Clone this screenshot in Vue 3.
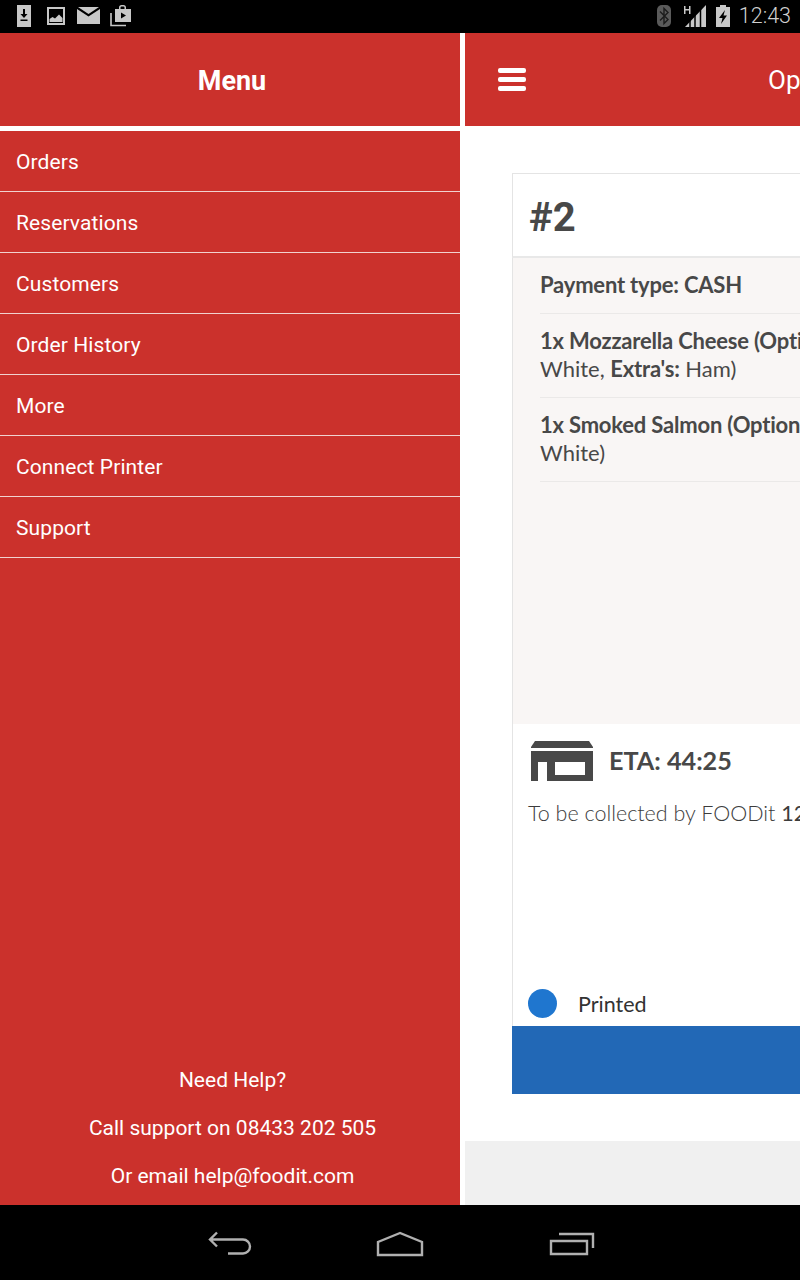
<script setup>
const menu = ['Orders', 'Reservations', 'Customers', 'Order History', 'More', 'Connect Printer', 'Support']
</script>

<template>
  <div class="screen">
    <div class="status">
      <div class="status-left">
        <svg width="16" height="22" viewBox="0 0 16 22"><path fill="#c8c8c8" fill-rule="evenodd" d="M1 0h14v22H1zM7 4v5H4.500L8 13l3.500-4H9V4zM4.500 14.500v1.500h7v-1.500z"/></svg>
        <svg width="18" height="18" viewBox="0 0 18 18"><path fill="#c8c8c8" fill-rule="evenodd" d="M0 0h18v18H0zM2 2v14h14V2z"/><path fill="#c8c8c8" d="M2.500 15v-3l3-2 2.500 1.500 4-4 3.500 3.500v4z"/></svg>
        <svg width="23" height="17" viewBox="0 0 23 17"><path fill="#c8c8c8" d="M1 0h21l-10.500 7zM0 2l11.500 7.500L23 2v15H0z"/></svg>
        <svg width="22" height="22" viewBox="0 0 22 22"><path fill="#c8c8c8" fill-rule="evenodd" d="M5 4h4V2.500C9 1 10 0 11.500 0h2C15 0 16 1 16 2.500V4h5v13H5zM10.500 4h4V2.500q0-1-1-1h-2q-1 0-1 1zM11 7.500v6l5-3z"/><path fill="none" stroke="#c8c8c8" stroke-width="1.600" d="M1 8v12.500h15"/></svg>
      </div>
      <div class="status-right">
        <svg width="14" height="22" viewBox="0 0 14 22"><rect width="14" height="22" rx="5" fill="#5a5a5a"/><path fill="none" stroke="#1c1c1c" stroke-width="1.400" d="M3 6.500l8 8L7 18.500V3.500l4 4-8 8"/></svg>
        <svg class="signal" width="24" height="22" viewBox="0 0 24 22"><path fill="#c8c8c8" d="M23 0v22H2z"/><path stroke="#000" stroke-width="1.500" d="M7 22V14M12 22V9M17.500 22V4"/><path fill="#c8c8c8" d="M1 1h1.500v3H6V1h1.500v8H6V5.500H2.500V9H1z"/></svg>
        <svg width="16" height="22" viewBox="0 0 16 22"><path fill="#c8c8c8" fill-rule="evenodd" d="M5 0h6v2h4v20H1V2h4zM10 5L4 13h3.500L6 19l6-8.500H8.500z"/></svg>
        <span class="clock">12:43</span>
      </div>
    </div>

    <div class="body">
      <aside class="drawer">
        <header class="drawer-head">Menu</header>
        <nav class="drawer-list">
          <a v-for="item in menu" :key="item" class="drawer-item">{{ item }}</a>
        </nav>
        <div class="help">
          <p>Need Help?</p>
          <p>Call support on 08433 202 505</p>
          <p>Or email help@foodit.com</p>
        </div>
      </aside>

      <main class="main">
        <header class="topbar">
          <div class="burger"><i></i><i></i><i></i></div>
          <span class="title">Open Orders</span>
        </header>
        <div class="content">
          <section class="card">
            <div class="card-head">#2</div>
            <div class="card-lines">
              <div class="line"><b>Payment type: CASH</b></div>
              <div class="line"><b>1x Mozzarella Cheese (Options:</b><br>White, <b>Extra's:</b> Ham)</div>
              <div class="line"><b>1x Smoked Salmon (Options:</b><br>White)</div>
            </div>
            <div class="card-foot">
              <div class="eta">
                <svg width="62" height="42" viewBox="0 0 62 42"><path fill="#484848" d="M4 1h54l4 6v1H0V7z"/><path fill="#484848" fill-rule="evenodd" d="M0 11h62v30H0zM7 22v19h9V22zM24 22v13h30V22z"/></svg>
                <span>ETA: 44:25</span>
              </div>
              <p class="collect">To be collected by FOODit <b>12:43</b></p>
              <div class="printed"><i class="dot"></i><span>Printed</span></div>
            </div>
            <div class="card-bar"></div>
          </section>
        </div>
        <footer class="grey"></footer>
      </main>
    </div>

    <div class="navbar">
      <svg width="46" height="26" viewBox="0 0 46 26"><path fill="none" stroke="#b0b0b0" stroke-width="2.400" d="M9 1.500L2 8.500l7 7M2.500 8.500H35a7 7 0 0 1 0 14H20"/></svg>
      <svg width="48" height="26" viewBox="0 0 48 26"><path fill="none" stroke="#b0b0b0" stroke-width="2.400" d="M24 2L2 11v13h44V11z"/></svg>
      <svg class="recents" width="46" height="24" viewBox="0 0 46 24"><path fill="none" stroke="#b0b0b0" stroke-width="2.400" d="M2 9h36v13H2zM10 2h34v14"/></svg>
    </div>
  </div>
</template>

<style>
html, body { margin: 0; background: #000; }
</style>

<style scoped>
.screen {
  width: 800px;
  height: 1280px;
  display: flex;
  flex-direction: column;
  overflow: hidden;
  background: #000;
  font-family: Roboto, sans-serif;
}
.status {
  height: 33px;
  flex: none;
  display: flex;
  justify-content: space-between;
  align-items: center;
  padding: 0 9px 2px 16px;
  box-sizing: border-box;
}
.status-left, .status-right { display: flex; align-items: center; }
.status-left svg { flex: none; }
.status-left svg:nth-child(2) { margin-left: 15px; }
.status-left svg:nth-child(3) { margin-left: 12px; }
.status-left svg:nth-child(4) { margin-left: 10px; }
.status-right { gap: 8px; }
.signal { margin-left: 4px; }
.clock { color: #d0d0d0; font-size: 21.5px; font-weight: 300; }
.body {
  flex: 1;
  min-height: 0;
  display: flex;
  gap: 5px;
  background: #fff;
}
.drawer {
  width: 460px;
  flex: none;
  display: flex;
  flex-direction: column;
  background: #cb312c;
  color: #fff;
}
.drawer-head {
  height: 93px;
  box-sizing: border-box;
  display: flex;
  align-items: center;
  justify-content: center;
  padding: 3px 0 0 4px;
  font-size: 27px;
  font-weight: 700;
}
.drawer-list {
  border-top: 5px solid #fff;
  display: flex;
  flex-direction: column;
}
.drawer-item {
  height: 61px;
  box-sizing: border-box;
  border-bottom: 1px solid #f1d2d0;
  display: flex;
  align-items: center;
  padding: 2px 16px 0;
  font-size: 21px;
  letter-spacing: .1px;
}
.help {
  margin-top: auto;
  padding: 0 0 5px 5px;
  text-align: center;
  font-size: 21px;
  line-height: 48px;
}
.help p { margin: 0; }
.main {
  flex: 1;
  min-width: 0;
  display: flex;
  flex-direction: column;
}
.topbar {
  height: 93px;
  flex: none;
  display: flex;
  align-items: center;
  background: #cb312c;
  color: #fff;
  padding-left: 33px;
  white-space: nowrap;
}
.burger { width: 28px; flex: none; display: flex; flex-direction: column; gap: 4px; }
.burger i { height: 5px; background: #fff; border-radius: 2px; }
.title { flex: none; margin-left: 242px; font-size: 26px; padding-top: 1px; }
.content {
  flex: 1;
  min-height: 0;
  padding: 47px 0 47px 47px;
}
.card {
  width: 560px;
  height: 100%;
  display: flex;
  flex-direction: column;
  color: #484848;
  font-family: Lato, sans-serif;
}
.card-head {
  height: 85px;
  flex: none;
  box-sizing: border-box;
  border: 1px solid #e4e4e4;
  border-bottom: 2px solid #e8e8e8;
  display: flex;
  align-items: center;
  padding: 4px 0 0 16px;
  font-family: Roboto, sans-serif;
  font-weight: 700;
  font-size: 40px;
}
.card-lines {
  flex: 1;
  min-height: 0;
  background: #f9f6f5;
  border-left: 1px solid #e4e4e4;
  padding: 0 0 0 27px;
  font-size: 22px;
}
.line {
  padding: 13px 0;
  line-height: 28px;
  white-space: nowrap;
  box-sizing: border-box;
  border-bottom: 1px solid #ebe9e8;
}
.line b { letter-spacing: -.2px; }
.line:first-child { height: 56px; }
.line:nth-child(n+2) { height: 84px; }
.card-foot {
  height: 302px;
  flex: none;
  box-sizing: border-box;
  border-left: 1px solid #e4e4e4;
  padding: 16px 0 0 15px;
  display: flex;
  flex-direction: column;
}
.eta {
  display: flex;
  align-items: center;
  gap: 16px;
  padding-left: 3px;
  font-size: 25.2px;
  font-weight: 700;
}
.eta span { margin-top: -2px; }
.collect {
  margin: 18px 0 0;
  white-space: nowrap;
  font-size: 21.5px;
  color: #3c3c3c;
  font-weight: 300;
}
.collect b { font-weight: 400; }
.printed {
  margin-top: auto;
  height: 44px;
  display: flex;
  align-items: center;
  gap: 21px;
  box-sizing: border-box;
  padding-bottom: 2px;
  color: #333;
  font-size: 21.5px;
}
.printed span { margin-top: 2px; }
.dot { width: 29px; height: 29px; border-radius: 50%; background: #1f76cf; }
.card-bar { height: 68px; flex: none; background: #2268b6; }
.grey { height: 64px; flex: none; background: #f0f0f0; }
.navbar {
  height: 75px;
  flex: none;
  display: flex;
  align-items: center;
  justify-content: center;
  gap: 122px;
  padding: 2px 0 0 2px;
  box-sizing: border-box;
  background: #000;
}
.recents { margin-left: 3px; }
</style>
